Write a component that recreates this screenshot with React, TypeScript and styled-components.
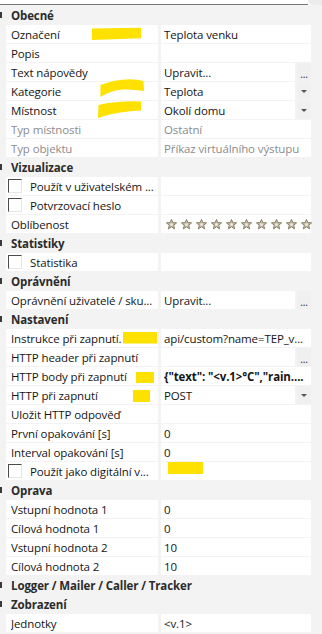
import React from 'react';
import styled, { createGlobalStyle } from 'styled-components';

const GlobalStyle = createGlobalStyle`
  html, body {
    margin: 0;
    padding: 0;
    background: #f3f3f3;
  }
  body {
    font-family: "Open Sans", "Noto Sans", sans-serif;
    font-size: 11.5px;
    letter-spacing: -0.12px;
    color: #151515;
  }
`;

type Kind = 'text' | 'edit' | 'select' | 'stars' | 'check';

interface Item {
  label: string;
  value?: string;
  kind?: Kind;
  muted?: boolean;
  bold?: boolean;
}

interface Section {
  title: string;
  items: Item[];
}

const sections: Section[] = [
  {
    title: 'Obecné',
    items: [
      { label: 'Označení', value: 'Teplota venku' },
      { label: 'Popis', value: '' },
      { label: 'Text nápovědy', value: 'Upravit...', kind: 'edit' },
      { label: 'Kategorie', value: 'Teplota', kind: 'select' },
      { label: 'Místnost', value: 'Okolí domu', kind: 'select' },
      { label: 'Typ místnosti', value: 'Ostatní', muted: true },
      { label: 'Typ objektu', value: 'Příkaz virtuálního výstupu', muted: true },
    ],
  },
  {
    title: 'Vizualizace',
    items: [
      { label: 'Použít v uživatelském ...', kind: 'check' },
      { label: 'Potvrzovací heslo', kind: 'check' },
      { label: 'Oblíbenost', kind: 'stars' },
    ],
  },
  { title: 'Statistiky', items: [{ label: 'Statistika', kind: 'check' }] },
  {
    title: 'Oprávnění',
    items: [{ label: 'Oprávnění uživatelé / sku...', value: 'Upravit...', kind: 'edit' }],
  },
  {
    title: 'Nastavení',
    items: [
      { label: 'Instrukce při zapnutí.', value: 'api/custom?name=TEP_v...' },
      { label: 'HTTP header při zapnutí', value: '', kind: 'edit' },
      { label: 'HTTP body při zapnutí', value: '{"text": "<v.1>°C","rain....', bold: true },
      { label: 'HTTP při zapnutí', value: 'POST', kind: 'select' },
      { label: 'Uložit HTTP odpověď', value: '' },
      { label: 'První opakování [s]', value: '0' },
      { label: 'Interval opakování [s]', value: '0' },
      { label: 'Použít jako digitální v...', kind: 'check' },
    ],
  },
  {
    title: 'Oprava',
    items: [
      { label: 'Vstupní hodnota 1', value: '0' },
      { label: 'Cílová hodnota 1', value: '0' },
      { label: 'Vstupní hodnota 2', value: '10' },
      { label: 'Cílová hodnota 2', value: '10' },
    ],
  },
  { title: 'Logger / Mailer / Caller / Tracker', items: [] },
  { title: 'Zobrazení', items: [{ label: 'Jednotky', value: '<v.1>' }] },
];

function Star() {
  return (
    <StarIcon viewBox="0 0 11 11">
      <path
        d="M5.5 0.4 L6.85 3.64 L10.6 3.85 L7.69 6.21 L8.65 9.9 L5.5 7.8 L2.35 9.9 L3.31 6.21 L0.4 3.85 L4.15 3.64 Z"
        fill="#c4bba6"
        stroke="#8a806a"
        strokeWidth="1"
        strokeLinejoin="round"
      />
      <circle cx="5.5" cy="5.7" r="1.4" fill="#ece7da" />
    </StarIcon>
  );
}

function ValueContent({ item }: { item: Item }) {
  if (item.kind === 'stars') {
    return (
      <Field>
        <Stars>
          {Array.from({ length: 10 }).map((_, i) => (
            <Star key={i} />
          ))}
        </Stars>
      </Field>
    );
  }
  if (item.kind === 'edit') {
    return (
      <>
        <Field>
          <Text>{item.value}</Text>
        </Field>
        <SideButton>...</SideButton>
      </>
    );
  }
  if (item.kind === 'select') {
    return (
      <>
        <Field>
          <Text>{item.value}</Text>
        </Field>
        <SideButton>
          <Arrow />
        </SideButton>
      </>
    );
  }
  return (
    <Field>
      <Text $muted={item.muted} $bold={item.bold}>
        {item.value}
      </Text>
    </Field>
  );
}

export default function App() {
  return (
    <Frame>
      <GlobalStyle />
      <TopEdge>
        <TopLine />
        <TopCorner />
      </TopEdge>
      <List>
        {sections.map((s) => (
          <React.Fragment key={s.title}>
            <Header>
              <Marker />
              {s.title}
            </Header>
            {s.items.map((item) => (
              <PropRow key={item.label}>
                <LabelCell $check={item.kind === 'check'}>
                  {item.kind === 'check' && <Checkbox />}
                  <Text $muted={item.muted}>{item.label}</Text>
                </LabelCell>
                <ValueCell>
                  <ValueContent item={item} />
                </ValueCell>
              </PropRow>
            ))}
          </React.Fragment>
        ))}
      </List>
      <Marks viewBox="0 0 322 634">
        <path d="M92 28.5 L141 27.7 L141 38.3 L92 40 Z" />
        <path d="M100.5 85 Q114 79.5 130 79.2 Q138 79.2 143.5 81 L144 91 Q134 89 123 89.5 Q110 90.5 100.5 97 Z" />
        <path d="M98.5 105 Q118 100.5 141 101.5 L141 110.5 Q118 111 98 118 Z" />
        <rect x="123" y="332" width="34" height="11.5" />
        <rect x="136" y="372" width="18" height="11" />
        <rect x="133" y="390" width="17" height="12" />
        <rect x="168" y="462" width="35" height="12" />
      </Marks>
    </Frame>
  );
}

const Frame = styled.div`
  position: relative;
  width: 322px;
  height: 634px;
  overflow: hidden;
  background: #f3f3f3;
`;

const TopEdge = styled.div`
  display: flex;
  height: 5px;
  background: #fff;
`;

const TopLine = styled.div`
  flex: 1;
  border-bottom: 1px solid #777;
`;

const TopCorner = styled.div`
  width: 14px;
  background: #ececec;
  border-bottom-left-radius: 9px;
`;

const List = styled.div`
  display: flex;
  flex-direction: column;
  padding-top: 1px;
`;

const Header = styled.div`
  display: flex;
  align-items: center;
  height: 18px;
  margin-bottom: 1px;
  font-weight: 700;
  color: #2b2b2b;
  white-space: nowrap;
`;

const Marker = styled.span`
  width: 2px;
  height: 6px;
  margin-right: 9px;
  background: #3a3a3a;
`;

const PropRow = styled.div`
  display: grid;
  grid-template-columns: 152px 150px;
  column-gap: 3px;
  height: 18px;
  margin: 0 0 1px 6px;
`;

const LabelCell = styled.div<{ $check?: boolean }>`
  display: flex;
  align-items: center;
  gap: 8px;
  min-width: 0;
  padding: 0 1px 0 ${(p) => (p.$check ? '2px' : '5px')};
  background: #fff;
`;

const Checkbox = styled.span`
  flex: none;
  width: 12px;
  height: 12px;
  border-top: 1px solid #4a4a4a;
  border-left: 1px solid #4a4a4a;
  border-right: 1px solid #e6e6e6;
  border-bottom: 1px solid #e6e6e6;
`;

const Text = styled.span<{ $muted?: boolean; $bold?: boolean }>`
  flex: 1;
  min-width: 0;
  overflow: hidden;
  white-space: nowrap;
  color: ${(p) => (p.$muted ? '#8c8c8c' : '#151515')};
  font-weight: ${(p) => (p.$bold ? 700 : 400)};
`;

const ValueCell = styled.div`
  display: flex;
  gap: 2px;
  min-width: 0;
`;

const Field = styled.div`
  flex: 1;
  min-width: 0;
  display: flex;
  align-items: center;
  padding-left: 3px;
  background: #fff;
`;

const SideButton = styled.div`
  flex: none;
  width: 14px;
  display: flex;
  align-items: center;
  justify-content: center;
  background: #f0f0f0;
  color: #222;
  font-size: 10px;
  line-height: 1;
  padding-top: 3px;
  box-sizing: border-box;
`;

const Arrow = styled.span`
  width: 0;
  height: 0;
  margin-top: -3px;
  border-left: 3px solid transparent;
  border-right: 3px solid transparent;
  border-top: 3px solid #555;
`;

const Stars = styled.div`
  display: flex;
  gap: 4px;
  padding-left: 2px;
`;

const StarIcon = styled.svg`
  flex: none;
  width: 11px;
  height: 11px;
`;

const Marks = styled.svg`
  position: absolute;
  inset: 0;
  width: 322px;
  height: 634px;
  pointer-events: none;
  fill: #ffe100;
`;
